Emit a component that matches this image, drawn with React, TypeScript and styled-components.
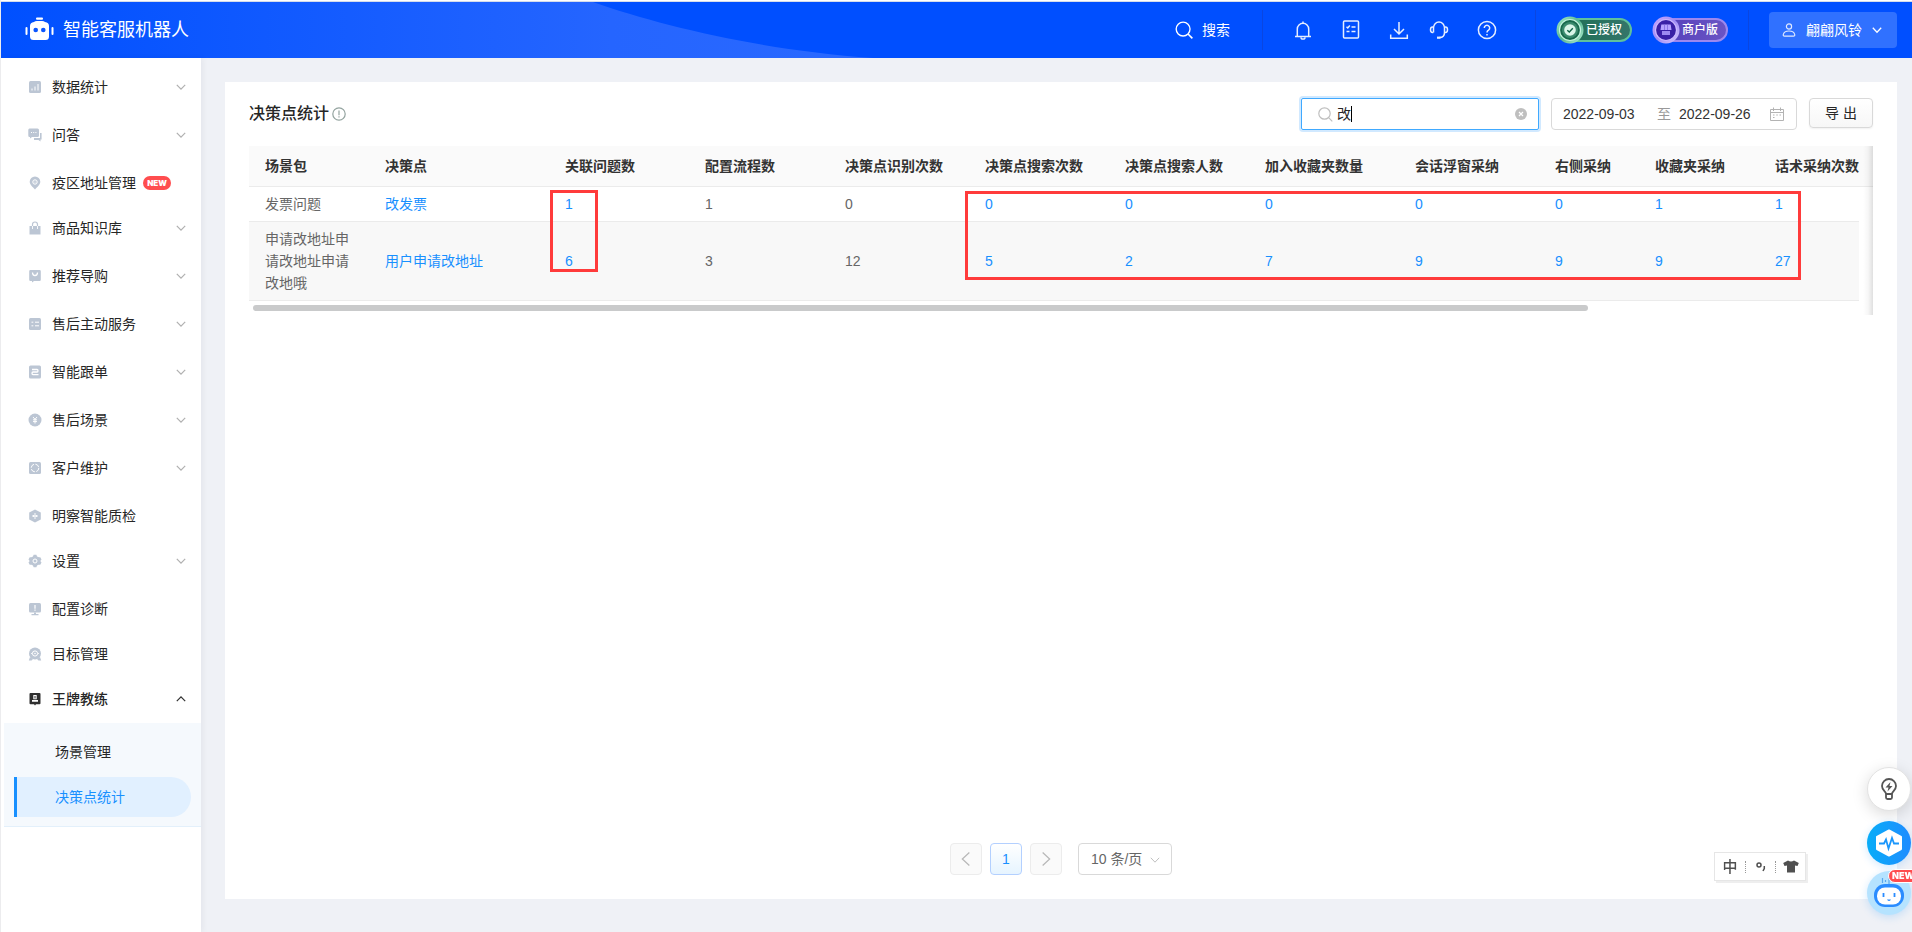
import React, { useState } from "react";
import styled, { createGlobalStyle, css } from "styled-components";

const c = {
  brand: "#004fff",
  link: "#1890ff",
  ink: "#262626",
  head: "#333333",
  body: "#666666",
  muted: "#bfbfbf",
  sideIcon: "#bcc6d4",
  page: "#eff1f6",
  line: "#ebebeb",
  field: "#d9d9d9",
  red: "#ff3b3b",
};

const GlobalStyle = createGlobalStyle`
  *, *::before, *::after { box-sizing: border-box; }
  body {
    margin: 0;
    background: #fff;
    color: ${c.ink};
    font-family: "Liberation Sans", "Noto Sans CJK SC", sans-serif;
    font-size: 14px;
    line-height: 22px;
  }
  button, input, select { font: inherit; color: inherit; margin: 0; }
  button { cursor: pointer; }
  a { text-decoration: none; color: inherit; }
  svg { display: block; flex: none; }
`;

const Shell = styled.div`
  display: flex;
  flex-direction: column;
  min-height: 100vh;
  padding-top: 1px;
  border-left: 1px solid #ececee;
  overflow-x: hidden;
`;

/* ---------- header ---------- */

const Header = styled.header`
  position: relative;
  display: flex;
  align-items: center;
  justify-content: space-between;
  height: 57px;
  padding: 0 15px 0 24px;
  border-top: 1px solid #d5dcea;
  background: ${c.brand};
  color: #fff;
`;

const Wave = styled.svg`
  position: absolute;
  left: 0;
  top: 0;
`;

const Brand = styled.h1`
  position: relative;
  display: flex;
  align-items: center;
  gap: 9px;
  margin: 0;
  font-size: 18px;
  font-weight: 400;
  line-height: 26px;
`;

const HeaderTools = styled.div`
  position: relative;
  display: flex;
  align-items: center;
`;

const PlainButton = styled.button`
  display: flex;
  align-items: center;
  gap: 9px;
  padding: 0;
  border: 0;
  background: none;
`;

const IconGroup = styled.div<{ $gap: number }>`
  display: flex;
  gap: ${(p) => p.$gap}px;
`;

const HeaderRule = styled.span<{ $before: number; $after: number }>`
  width: 1px;
  height: 40px;
  margin: 0 ${(p) => p.$after}px 0 ${(p) => p.$before}px;
  background: #0a46e0;
`;

const Medal = styled.a<{ $tone: "green" | "violet" }>`
  position: relative;
  display: flex;
  align-items: center;
  justify-content: flex-end;
  width: 76px;
  height: 28px;

  span {
    width: 66px;
    height: 24px;
    padding-left: 18px;
    border: 2px solid ${(p) => (p.$tone === "green" ? "#5fc09c" : "#9c88ee")};
    border-radius: 12px;
    background: ${(p) =>
      p.$tone === "green"
        ? "linear-gradient(90deg, #1f6f55, #34756a)"
        : "linear-gradient(90deg, #5541bb, #6a54c4)"};
    font-size: 12px;
    font-weight: 500;
    line-height: 20px;
    white-space: nowrap;
  }
  svg { position: absolute; left: 0; top: 0; }
`;

const MedalRow = styled.div`
  display: flex;
  gap: 20px;
`;

const UserButton = styled.button`
  display: flex;
  align-items: center;
  justify-content: space-between;
  width: 128px;
  height: 36px;
  padding: 0 15px 0 13px;
  border: 0;
  border-radius: 4px;
  background: #3071ff;
`;

/* ---------- sidebar ---------- */

const Columns = styled.div`
  display: flex;
  flex: 1;
`;

const Sidebar = styled.nav`
  z-index: 1;
  flex: none;
  width: 200px;
  padding-top: 5px;
  background: #fff;
  box-shadow: 2px 0 6px rgba(0, 21, 41, 0.05);
`;

const MenuList = styled.ul`
  margin: 0;
  padding: 0;
  list-style: none;
`;

const MenuEntry = styled.li<{ $group: boolean }>`
  padding: 4px 0 ${(p) => (p.$group ? 4 : 1)}px;
`;

const MenuButton = styled.button<{ $open: boolean }>`
  display: flex;
  align-items: center;
  width: 100%;
  height: 40px;
  padding: 0 15px 0 27px;
  border: 0;
  background: none;
  color: ${c.ink};
  font-weight: ${(p) => (p.$open ? 500 : 400)};

  > svg:first-child { margin-right: 10px; color: ${(p) => (p.$open ? "#303030" : c.sideIcon)}; }
  > svg:last-child:not(:first-child) {
    margin-left: auto;
    color: ${(p) => (p.$open ? "#303030" : "#b0b0b0")};
  }
`;

const NewTag = styled.span`
  width: 28px;
  height: 14px;
  margin-left: 7px;
  border-radius: 7px;
  background: #ff4d4f;
  color: #fff;
  font-family: Inter, sans-serif;
  font-size: 8px;
  font-weight: 900;
  line-height: 14px;
  text-align: center;
`;

const SubMenu = styled.ul`
  display: flex;
  flex-direction: column;
  gap: 5px;
  margin: 0 0 0 3px;
  padding: 9px 10px;
  border-bottom: 1px solid #e3f0fb;
  background: #f5f9fd;
  list-style: none;
`;

const SubLink = styled.a<{ $active: boolean }>`
  display: block;
  height: 40px;
  padding-left: 38px;
  border-left: 3px solid transparent;
  border-radius: 0 20px 20px 0;
  line-height: 40px;
  ${(p) =>
    p.$active &&
    css`
      border-left-color: ${c.link};
      background: #e1f0ff;
      color: ${c.link};
    `}
`;

/* ---------- main card ---------- */

const Main = styled.main`
  display: flex;
  flex: 1;
  min-width: 0;
  padding: 24px 15px 33px 24px;
  background: ${c.page};
`;

const Card = styled.section`
  display: flex;
  flex-direction: column;
  flex: 1;
  min-width: 0;
  padding: 16px 24px 24px;
  background: #fff;
`;

const Toolbar = styled.div`
  display: flex;
  align-items: flex-start;
  justify-content: space-between;
  margin-bottom: 16px;
`;

const Title = styled.h2`
  display: flex;
  align-items: center;
  gap: 3px;
  margin: 0;
  color: ${c.ink};
  font-size: 16px;
  font-weight: 500;
  line-height: 32px;
  svg { color: #93a39f; }
`;

const Filters = styled.form`
  display: flex;
  align-items: flex-start;
  gap: 12px;
`;

const SearchBox = styled.label`
  position: relative;
  display: flex;
  align-items: center;
  gap: 4px;
  width: 238px;
  height: 32px;
  padding: 0 11px 0 16px;
  border: 1px solid #40a9ff;
  border-radius: 2px;
  box-shadow: 0 0 0 2px rgba(24, 144, 255, 0.2);
  color: ${c.muted};

  input {
    flex: 1;
    min-width: 0;
    padding: 0;
    border: 0;
    outline: 0;
    background: none;
    color: ${c.ink};
    caret-color: transparent;
  }
`;

const Caret = styled.i`
  position: absolute;
  left: 49px;
  top: 7px;
  width: 1px;
  height: 16px;
  background: #000;
`;

const ClearButton = styled.button`
  padding: 0;
  border: 0;
  background: none;
  color: ${c.muted};
`;

const DateRange = styled.div`
  display: flex;
  align-items: center;
  width: 246px;
  height: 32px;
  padding: 0 12px 0 11px;
  border: 1px solid ${c.field};
  border-radius: 4px;
  color: #999;

  input {
    width: 74px;
    padding: 0;
    border: 0;
    background: none;
    color: ${c.head};
  }
  span { margin: 0 8px 0 20px; }
  svg { margin-left: auto; color: #b3b3b3; }
`;

const ExportButton = styled.button`
  width: 64px;
  height: 30px;
  padding: 0;
  border: 1px solid ${c.field};
  border-radius: 4px;
  background: linear-gradient(#fff, #f7f7f7);
  box-shadow: 0 1px 2px rgba(0, 0, 0, 0.06);
`;

const TableFrame = styled.div`
  position: relative;
  height: 169px;
  overflow: hidden;

  &::after {
    content: "";
    position: absolute;
    top: 0;
    right: 0;
    bottom: 0;
    width: 10px;
    background: linear-gradient(90deg, rgba(0, 0, 0, 0), rgba(0, 0, 0, 0.03) 50%, rgba(0, 0, 0, 0.12));
  }
`;

const Grid = styled.table`
  width: 100%;
  min-width: 1624px;
  table-layout: fixed;
  border-collapse: separate;
  border-spacing: 0;
  text-align: left;
`;

const HeadCell = styled.th<{ $last?: boolean }>`
  height: 41px;
  padding: 0 ${(p) => (p.$last ? 0 : 16)}px 0 16px;
  border-bottom: 1px solid ${c.line};
  background: #fafafa;
  color: ${c.head};
  font-weight: 600;
  white-space: nowrap;
`;

const Row = styled.tr<{ $shaded: boolean }>`
  td { background: ${(p) => (p.$shaded ? "#f8f8f8" : "#fff")}; }
`;

const Cell = styled.td`
  padding: 6px 16px;
  border-bottom: 1px solid ${c.line};
  color: ${c.body};
  a { color: ${c.link}; }
`;

const GutterHead = styled(HeadCell)`
  padding: 0;
`;

const Gutter = styled.td`
  && { background: #fff; }
`;

const ScrollThumb = styled.div`
  width: calc(82% + 3px);
  height: 6px;
  margin: 4px 0 0 4px;
  border-radius: 3px;
  background: #c9cacb;
`;

/* red annotation frames that lie over the table */
const Highlight = styled.div<{ $x: number; $y: number; $w: number; $h: number }>`
  position: absolute;
  left: ${(p) => p.$x}px;
  top: ${(p) => p.$y}px;
  width: ${(p) => p.$w}px;
  height: ${(p) => p.$h}px;
  border: 3px solid ${c.red};
  pointer-events: none;
`;

const Pager = styled.div`
  display: flex;
  justify-content: center;
  gap: 8px;
  margin-top: auto;
`;

const PageButton = styled.button<{ $current?: boolean }>`
  display: flex;
  align-items: center;
  justify-content: center;
  width: 32px;
  height: 32px;
  padding: 0;
  border: 1px solid ${(p) => (p.$current ? "#b3d0ff" : "#ececec")};
  border-radius: 4px;
  background: ${(p) => (p.$current ? "linear-gradient(#fff, #e6f4ff)" : "#fafafa")};
  color: ${(p) => (p.$current ? c.link : "#b8b8b8")};
`;

const SizePicker = styled.label`
  position: relative;
  margin-left: 8px;
  color: ${c.muted};

  select {
    display: block;
    width: 94px;
    height: 32px;
    padding: 0 26px 0 12px;
    border: 1px solid ${c.field};
    border-radius: 4px;
    appearance: none;
    background: #fff;
    color: ${c.body};
  }
  svg { position: absolute; right: 12px; top: 12px; pointer-events: none; }
`;

/* ---------- floating items ---------- */

const ImeBar = styled.div`
  position: fixed;
  right: 106px;
  bottom: 51px;
  display: flex;
  align-items: center;
  width: 92px;
  height: 29px;
  border: 1px solid #e6e6e6;
  background: #fff;
  box-shadow: 2px 2px 0 #eee;
  color: #505050;
  font-size: 15px;
  font-weight: 500;
`;

const ImeKey = styled.button`
  display: flex;
  align-items: center;
  justify-content: center;
  width: 30px;
  height: 12px;
  padding: 0;
  border: 0;
  background: none;
  & + & { border-left: 1px dotted #999; }
`;

const Floaters = styled.div`
  position: fixed;
  right: 1px;
  bottom: 17px;
  display: flex;
  flex-direction: column;
  gap: 6px;
`;

const Floater = styled.button<{ $kind: "tip" | "pulse" | "robot" }>`
  position: relative;
  display: flex;
  align-items: center;
  justify-content: center;
  width: 44px;
  height: 44px;
  padding: 0;
  border: 0;
  border-radius: 50%;
  ${(p) =>
    p.$kind === "tip" &&
    css`
      margin-bottom: 4px;
      border: 1px solid #e2e2e2;
      background: #fff;
      box-shadow: 0 4px 16px rgba(0, 0, 0, 0.15);
      color: #555;
    `}
  ${(p) =>
    p.$kind === "pulse" &&
    css`
      background: linear-gradient(90deg, #08adf8, #1f8cff);
      box-shadow: 0 2px 8px rgba(24, 144, 255, 0.2);
    `}
  ${(p) =>
    p.$kind === "robot" &&
    css`
      background: #b5e3ff;
      box-shadow: 0 2px 8px rgba(24, 144, 255, 0.2);
    `}
`;

const CornerTag = styled.span`
  position: absolute;
  left: 21px;
  top: -2px;
  width: 32px;
  height: 14px;
  padding-left: 3px;
  border: 1px solid #fff;
  border-radius: 7px;
  background: #ff4d4f;
  color: #fff;
  font-family: Inter, sans-serif;
  font-size: 9px;
  font-weight: 900;
  line-height: 12px;
  text-align: left;
`;

/* ---------- drawings ---------- */

const Chevron = ({ dir = "down", size = 10, width = 1 }: { dir?: "down" | "up" | "left" | "right"; size?: number; width?: number }) => {
  const d = {
    down: "M0.8 2.8 5 7.2 9.2 2.8",
    up: "M0.8 7.2 5 2.8 9.2 7.2",
    left: "M7.4 0.4 2.4 5 7.4 9.6",
    right: "M2.6 0.4 7.6 5 2.6 9.6",
  }[dir];
  return (
    <svg width={size} height={size} viewBox="0 0 10 10" fill="none" stroke="currentColor" strokeWidth={width} aria-hidden>
      <path d={d} />
    </svg>
  );
};

const sideShapes: Record<string, React.ReactNode> = {
  chart: (
    <>
      <rect x="1" y="1" width="12" height="12" rx="1.5" />
      <path d="M4 8.5V10.5M7 6.5V10.5M10 4V10.5" stroke="#fff" strokeWidth="1" />
    </>
  ),
  chat: (
    <>
      <path d="M1.500 .5H9.500Q11 .5 11 2V7.500Q11 9 9.500 9H4L2 10.500V9H1.500Q0.300 9 0.300 7.500V2Q0.300 .5 1.500 .5Z" />
      <path d="M12 5H13.600V11.500H12.500V13.500L10.500 12H6V10H12Z" />
      <path d="M3 4.500H4M5.200 4.500H6.200M7.400 4.500H8.400" stroke="#fff" strokeWidth="1.200" />
    </>
  ),
  pin: (
    <>
      <path d="M7 .5a5.300 5.300 0 0 1 5.300 5.300c0 3-3 5.200-5.300 7.700C4.700 11 1.700 8.800 1.700 5.800A5.300 5.300 0 0 1 7 .5Z" />
      <circle cx="7" cy="6" r="2.200" fill="none" stroke="#fff" strokeWidth="1" />
      <circle cx="7" cy="6" r=".6" fill="#fff" />
    </>
  ),
  bag: (
    <>
      <path d="M1.500 5H12.500V13.500H1.500Z" />
      <path d="M4.500 7V3.500a2.500 2.500 0 0 1 5 0V7" fill="none" stroke="currentColor" strokeWidth="1.200" />
      <path d="M4.500 5V8M9.500 5V8" stroke="#fff" strokeWidth=".9" />
    </>
  ),
  guide: (
    <>
      <path d="M2.500 1H11.500Q12.800 1 12.800 2.300V10.700Q12.800 12 11.500 12H6L4 13.600V12H2.500Q1.200 12 1.200 10.700V2.300Q1.200 1 2.500 1Z" />
      <path d="M4.500 3.500C4.500 7.500 9.500 7.500 9.500 3.500" fill="none" stroke="#fff" strokeWidth="1.300" />
    </>
  ),
  list: (
    <>
      <rect x="1" y="1" width="12" height="12" rx="1.500" />
      <path d="M3.500 5.200H5.300M3.500 8.800H5.300M7 5.200H11M7 8.800H11" stroke="#fff" strokeWidth="1" />
    </>
  ),
  follow: (
    <>
      <rect x="1" y=".6" width="12" height="13" rx="1.500" />
      <path d="M4 4.500H9Q10 4.500 10 5.700T9 7H5Q4 7 4 8.300T5 9.700H10.500" fill="none" stroke="#fff" strokeWidth="1.300" />
    </>
  ),
  refund: (
    <>
      <circle cx="7" cy="7" r="6.500" />
      <path d="M5 4 7 6.300 9 4M7 6V10.500M5 6.800H9M5 8.600H9" fill="none" stroke="#fff" strokeWidth="1" />
    </>
  ),
  care: (
    <>
      <rect x="1" y="1" width="12" height="12" rx="1.500" />
      <circle cx="7" cy="7" r="3.800" fill="none" stroke="#fff" strokeWidth="1" strokeDasharray="4.500 1.470" />
    </>
  ),
  inspect: (
    <>
      <path d="M7 .4 12.800 3.600V10.400L7 13.600 1.200 10.400V3.600Z" />
      <path d="M7 4V10M4 7H10M5.500 6V8M8.500 6V8" stroke="#fff" strokeWidth=".9" />
    </>
  ),
  gear: (
    <>
      <path d="M5.600.7H8.400L9 2.500 11 3.300 12.300 3.200 13.500 5.500 12.300 7 13.500 8.500 12.300 10.800 10.500 10.800 9 11.600 8.400 13.300H5.600L5 11.600 3.500 10.800 1.700 10.800.5 8.500 1.700 7 .5 5.500 1.700 3.200 3.300 3.300 5 2.500Z" />
      <circle cx="7" cy="7" r="2" fill="none" stroke="#fff" strokeWidth="1" />
    </>
  ),
  monitor: (
    <>
      <rect x="1" y="1" width="12" height="9.500" rx="1.500" />
      <path d="M6 10.500H8V12H10.500V13.200H3.500V12H6Z" />
      <path d="M7 3V6.800M7 7.600V8.700" stroke="#fff" strokeWidth="1.200" />
    </>
  ),
  target: (
    <>
      <circle cx="7" cy="6.500" r="6" />
      <path d="M2 10 .8 13.400H3.500L5 12ZM12 10 13.200 13.400H10.500L9 12Z" />
      <circle cx="7" cy="6.500" r="2.600" fill="none" stroke="#fff" strokeWidth="1" />
      <circle cx="7" cy="6.500" r=".8" fill="#fff" />
      <path d="M3.200 6.500H4.200M9.800 6.500H10.800" stroke="#fff" strokeWidth="1" />
    </>
  ),
  coach: (
    <>
      <path d="M2.500 1H11.500Q12.500 1 12.500 2V11.300Q12.500 12.300 11.500 12.300H8L7 13.400 6 12.300H2.500Q1.500 12.300 1.500 11.300V2Q1.500 1 2.500 1Z" />
      <path d="M5.300 3H8.700V7.300H5.300ZM4 8H10V9.800H4Z" fill="#fff" />
      <path d="M7 4V6.500" stroke="#303030" strokeWidth="1" />
    </>
  ),
};

const SideIcon = ({ name }: { name: string }) => (
  <svg width="14" height="14" viewBox="0 0 14 14" fill="currentColor" aria-hidden>
    {sideShapes[name]}
  </svg>
);

const HeaderIcon = ({ size = 20, children }: { size?: number; children: React.ReactNode }) => (
  <svg width={size} height={size} viewBox="0 0 20 20" fill="none" stroke="#e6eeff" strokeWidth="1.500" aria-hidden>
    {children}
  </svg>
);

const Logo = () => (
  <svg width="29" height="26" viewBox="0 0 29 26" fill="#fff" aria-hidden>
    <rect x="11" y="0.500" width="7" height="2.200" rx="1" />
    <path d="M9 5Q10 4 12 4H17Q19 4 20 5 24 5.500 24 9V19.500Q24 23 20.500 23H8.500Q5 23 5 19.500V9Q5 5.500 9 5Z" />
    <rect x="0.500" y="10" width="2" height="8" rx="1" />
    <rect x="26.500" y="10" width="2" height="8" rx="1" />
    <circle cx="10.700" cy="13" r="2.300" fill="#0a55ff" />
    <circle cx="18.300" cy="13" r="2.300" fill="#0a55ff" />
  </svg>
);

const MedalDisc = ({ tone }: { tone: "green" | "violet" }) => {
  const g = tone === "green";
  return (
    <svg width="28" height="28" viewBox="0 0 28 28" aria-hidden>
      <defs>
        <linearGradient id={`rim-${tone}`} x1="0" y1="0" x2="1" y2="1">
          <stop offset="0" stopColor={g ? "#a5ecca" : "#c8a6ff"} />
          <stop offset=".5" stopColor={g ? "#55b48d" : "#9f8cf5"} />
          <stop offset="1" stopColor={g ? "#b6f0d6" : "#d9c8ff"} />
        </linearGradient>
      </defs>
      <circle cx="14" cy="14" r="13.500" fill={`url(#rim-${tone})`} />
      <circle cx="14" cy="14" r="10.500" fill={g ? "#18694c" : "#3a20a6"} stroke={g ? "#c5f3df" : "#cdb9ff"} strokeWidth="1.200" />
      {g ? (
        <>
          <circle cx="14" cy="14" r="8" fill="#3a8a6d" />
          <circle cx="14" cy="14" r="5.800" fill="#d9f5e8" />
          <path d="M11.300 14.200 13.300 16 16.800 12.300" fill="none" stroke="#0f6145" strokeWidth="1.400" />
        </>
      ) : (
        <>
          <path d="M9.300 8.500H18.700L19.500 14H8.500Z" fill="#b6a2ff" />
          <path d="M10 15H18V19H10Z" fill="#9d89f0" />
          <path d="M12.500 8.500V14M15.500 8.500V14" stroke="#8068e0" strokeWidth=".8" />
        </>
      )}
    </svg>
  );
};

/* ---------- data ---------- */

type MenuItem = { label: string; icon: string; group?: boolean; isNew?: boolean; open?: boolean };

const menu: MenuItem[] = [
  { label: "数据统计", icon: "chart", group: true },
  { label: "问答", icon: "chat", group: true },
  { label: "疫区地址管理", icon: "pin", isNew: true },
  { label: "商品知识库", icon: "bag", group: true },
  { label: "推荐导购", icon: "guide", group: true },
  { label: "售后主动服务", icon: "list", group: true },
  { label: "智能跟单", icon: "follow", group: true },
  { label: "售后场景", icon: "refund", group: true },
  { label: "客户维护", icon: "care", group: true },
  { label: "明察智能质检", icon: "inspect" },
  { label: "设置", icon: "gear", group: true },
  { label: "配置诊断", icon: "monitor" },
  { label: "目标管理", icon: "target" },
  { label: "王牌教练", icon: "coach", group: true, open: true },
];

const columns: { title: string; width?: number; link?: boolean }[] = [
  { title: "场景包", width: 120 },
  { title: "决策点", width: 180, link: true },
  { title: "关联问题数", width: 140, link: true },
  { title: "配置流程数", width: 140 },
  { title: "决策点识别次数", width: 140 },
  { title: "决策点搜索次数", width: 140, link: true },
  { title: "决策点搜索人数", width: 140, link: true },
  { title: "加入收藏夹数量", width: 150, link: true },
  { title: "会话浮窗采纳", width: 140, link: true },
  { title: "右侧采纳", width: 100, link: true },
  { title: "收藏夹采纳", width: 120, link: true },
  { title: "话术采纳次数", link: true },
];

const rows = [
  ["发票问题", "改发票", "1", "1", "0", "0", "0", "0", "0", "0", "1", "1"],
  ["申请改地址申请改地址申请改地哦", "用户申请改地址", "6", "3", "12", "5", "2", "7", "9", "9", "9", "27"],
];

/* ---------- page ---------- */

const TopBar = () => (
  <Header>
    <Wave width="900" height="56" viewBox="0 0 900 56" aria-hidden>
      <defs>
        <linearGradient id="wave" x1="0" x2="1">
          <stop offset="0" stopColor="#0050ff" />
          <stop offset=".7" stopColor="#2565ff" />
          <stop offset="1" stopColor="#2a69ff" />
        </linearGradient>
      </defs>
      <path d="M0 0H592C660 24 760 48 872 56H0Z" fill="url(#wave)" />
    </Wave>
    <Brand>
      <Logo />
      智能客服机器人
    </Brand>
    <HeaderTools>
      <PlainButton type="button">
        <HeaderIcon size={18}>
          <circle cx="9" cy="9" r="7.700" stroke="#fff" />
          <path d="M14.500 14.500 19.300 19.300" stroke="#fff" strokeWidth="1.800" />
        </HeaderIcon>
        搜索
      </PlainButton>
      <HeaderRule $before={32} $after={30} />
      <IconGroup $gap={28}>
        <PlainButton type="button" aria-label="通知">
          <HeaderIcon>
            <path d="M2 16.500H18M4.300 16.500V9a5.700 5.700 0 0 1 11.400 0v7.500M8 17.500a2 1.600 0 0 0 4 0M10 1.500V3" />
          </HeaderIcon>
        </PlainButton>
        <PlainButton type="button" aria-label="任务">
          <HeaderIcon>
            <rect x="2.500" y="1" width="15" height="17" rx="1" />
            <path d="M5.500 6.800 6.800 8 8.800 5.500M10.500 7H14.500M5.500 11.500H8.500M10.500 11.500H14.500" />
          </HeaderIcon>
        </PlainButton>
        <IconGroup $gap={20}>
          <PlainButton type="button" aria-label="下载">
            <HeaderIcon>
              <path d="M10 2V13.500M5 9 10 14 15 9M1.700 14.500V18.300H18.300V14.500" />
            </HeaderIcon>
          </PlainButton>
          <PlainButton type="button" aria-label="客服">
            <HeaderIcon>
              <path d="M4.500 12.500V7.800a5.500 5.800 0 0 1 11 0v4.700c0 3-2 5-5 5" />
              <path d="M4.300 7H3.500Q1.500 7 1.500 9.700T3.500 12.500H4.300M15.700 7H16.500Q18.500 7 18.500 9.700T16.500 12.500H15.700" />
              <path d="M8 17.700H11.500" strokeWidth="2.200" />
            </HeaderIcon>
          </PlainButton>
        </IconGroup>
        <PlainButton type="button" aria-label="帮助">
          <HeaderIcon>
            <circle cx="10" cy="10" r="8.600" />
            <path d="M7.300 8a2.700 2.700 0 1 1 4.200 2.200C10.400 10.900 10 11.300 10 12.500M10 14V15.600" />
          </HeaderIcon>
        </PlainButton>
      </IconGroup>
      <HeaderRule $before={38} $after={20} />
      <MedalRow>
        <Medal href="#license" $tone="green">
          <span>已授权</span>
          <MedalDisc tone="green" />
        </Medal>
        <Medal href="#edition" $tone="violet">
          <span>商户版</span>
          <MedalDisc tone="violet" />
        </Medal>
      </MedalRow>
      <HeaderRule $before={20} $after={20} />
      <UserButton type="button">
        <svg width="14" height="14" viewBox="0 0 14 14" fill="none" stroke="#dfe9ff" strokeWidth="1.200" aria-hidden>
          <circle cx="7" cy="3.500" r="2.600" />
          <path d="M2.500 13.200H11.500Q13 13.200 12.700 11.500C12.200 9 10 8 7 8S1.800 9 1.300 11.500Q1 13.200 2.500 13.200Z" />
        </svg>
        翩翩风铃
        <Chevron width={1.3} />
      </UserButton>
    </HeaderTools>
  </Header>
);

const SideMenu = () => (
  <Sidebar>
    <MenuList>
      {menu.map((m) => (
        <MenuEntry key={m.label} $group={!!m.group}>
          <MenuButton type="button" $open={!!m.open} aria-expanded={m.group ? !!m.open : undefined}>
            <SideIcon name={m.icon} />
            {m.label}
            {m.isNew && <NewTag>NEW</NewTag>}
            {m.group && <Chevron dir={m.open ? "up" : "down"} width={1.2} />}
          </MenuButton>
        </MenuEntry>
      ))}
    </MenuList>
    <SubMenu>
      <li>
        <SubLink href="#scenes" $active={false}>场景管理</SubLink>
      </li>
      <li>
        <SubLink href="#decisions" $active>决策点统计</SubLink>
      </li>
    </SubMenu>
  </Sidebar>
);

const FilterBar = () => {
  const [keyword, setKeyword] = useState("改");
  return (
    <Filters onSubmit={(e) => e.preventDefault()}>
      <SearchBox>
        <svg width="15" height="15" viewBox="0 0 15 15" fill="none" stroke="currentColor" strokeWidth="1.200" aria-hidden>
          <circle cx="6.500" cy="6.500" r="5.700" />
          <path d="M10.600 10.600 14.300 14.300" />
        </svg>
        <input aria-label="搜索决策点" value={keyword} onChange={(e) => setKeyword(e.target.value)} />
        <Caret />
        <ClearButton type="button" aria-label="清空" onClick={() => setKeyword("")}>
          <svg width="12" height="12" viewBox="0 0 12 12" aria-hidden>
            <circle cx="6" cy="6" r="6" fill="currentColor" />
            <path d="M4 4 8 8M8 4 4 8" stroke="#fff" strokeWidth="1.200" />
          </svg>
        </ClearButton>
      </SearchBox>
      <DateRange>
        <input aria-label="开始日期" defaultValue="2022-09-03" />
        <span>至</span>
        <input aria-label="结束日期" defaultValue="2022-09-26" />
        <svg width="14" height="14" viewBox="0 0 14 14" fill="none" stroke="currentColor" aria-hidden>
          <path d="M.5 2.500H13.500V13.500H.5ZM.5 5.500H13.500M3.500.5V4M10.500.5V4" />
          <path d="M3 8H4.500M6.300 8H7.800M9.500 8H11M3 10.500H4.500" />
        </svg>
      </DateRange>
      <ExportButton type="button">导 出</ExportButton>
    </Filters>
  );
};

const StatsTable = () => (
  <TableFrame>
    <Grid>
      <colgroup>
        {columns.map((col) => (
          <col key={col.title} width={col.width} />
        ))}
        <col width={14} />
      </colgroup>
      <thead>
        <tr>
          {columns.map((col, i) => (
            <HeadCell key={col.title} scope="col" $last={i === columns.length - 1}>
              {col.title}
            </HeadCell>
          ))}
          <GutterHead as="td" />
        </tr>
      </thead>
      <tbody>
        {rows.map((row, r) => (
          <Row key={row[0]} $shaded={r % 2 === 1}>
            {row.map((value, i) => (
              <Cell key={columns[i].title}>{columns[i].link ? <a href="#detail">{value}</a> : value}</Cell>
            ))}
            <Gutter />
          </Row>
        ))}
      </tbody>
    </Grid>
    <ScrollThumb />
    <Highlight $x={301} $y={44} $w={48} $h={82} />
    <Highlight $x={716} $y={45} $w={836} $h={89} />
  </TableFrame>
);

const Pagination = () => (
  <Pager>
    <PageButton type="button" aria-label="上一页">
      <Chevron dir="left" size={14} width={0.9} />
    </PageButton>
    <PageButton type="button" $current>1</PageButton>
    <PageButton type="button" aria-label="下一页">
      <Chevron dir="right" size={14} width={0.9} />
    </PageButton>
    <SizePicker>
      <select aria-label="每页条数" defaultValue="10">
        <option value="10">10 条/页</option>
        <option value="20">20 条/页</option>
      </select>
      <Chevron />
    </SizePicker>
  </Pager>
);

const FloatingTools = () => (
  <>
    <ImeBar>
      <ImeKey type="button">中</ImeKey>
      <ImeKey type="button" aria-label="标点">
        <svg width="10" height="11" viewBox="0 0 10 11" fill="none" stroke="currentColor" strokeWidth="1.500" aria-hidden>
          <circle cx="3" cy="4" r="2" />
          <path d="M8.300 5V7.500L7 10" />
        </svg>
      </ImeKey>
      <ImeKey type="button" aria-label="皮肤">
        <svg width="16" height="13" viewBox="0 0 16 13" fill="currentColor" aria-hidden>
          <path d="M5 .5Q8 2.500 11 .5L15.800 3 14.500 6 12 5.500V12.500H4V5.500L1.500 6 .2 3Z" />
        </svg>
      </ImeKey>
    </ImeBar>
    <Floaters>
      <Floater type="button" $kind="tip" aria-label="提示">
        <svg width="16" height="22" viewBox="0 0 16 22" fill="none" stroke="currentColor" strokeWidth="1.800" aria-hidden>
          <path d="M5 16C5 13.500 1 12.500 1 8a7 7 0 0 1 14 0c0 4.500-4 5.500-4 8ZM5 16V19.500Q5 21 6.500 21H9.500Q11 21 11 19.500V16" />
          <path d="M9.500 4 4.500 9.500H7.500L6.500 13.500 11.500 8H8.500Z" fill="currentColor" stroke="none" />
        </svg>
      </Floater>
      <Floater type="button" $kind="pulse" aria-label="诊断">
        <svg width="28" height="28" viewBox="0 0 28 28" aria-hidden>
          <path d="M14 1.500 26 8V20L14 26.500 2 20V8Z" fill="#fff" stroke="#fff" strokeWidth="2" strokeLinejoin="round" />
          <path d="M4 14.500H9L11 10.500 13.500 19.500 17 9 19 14.500H24" fill="none" stroke="#1a96fb" strokeWidth="1.800" />
        </svg>
      </Floater>
      <Floater type="button" $kind="robot" aria-label="机器人">
        <svg width="32" height="32" viewBox="0 0 32 32" aria-hidden>
          <path d="M9.500 1V6M12.500 3V5M16 1V8" stroke="#5aa9ee" strokeWidth="1.200" />
          <rect x="1" y="7" width="30" height="23" rx="11" fill="#2a8cff" />
          <rect x="4" y="10.500" width="24" height="17" rx="8" fill="#fff" />
          <path d="M10.500 16V20M21.500 16V20" stroke="#2a8cff" strokeWidth="1.800" />
          <path d="M14 22.500H18Q16 25.500 14 22.500Z" fill="#2a8cff" />
        </svg>
        <CornerTag>NEW</CornerTag>
      </Floater>
    </Floaters>
  </>
);

export default function App() {
  return (
    <>
      <GlobalStyle />
      <Shell>
        <TopBar />
        <Columns>
          <SideMenu />
          <Main>
            <Card>
              <Toolbar>
                <Title>
                  决策点统计
                  <svg width="14" height="14" viewBox="0 0 14 14" fill="none" stroke="currentColor" strokeWidth="1.200" aria-hidden>
                    <circle cx="7" cy="7" r="6.200" />
                    <path d="M7 3.500V8.300M7 9.300V10.600" />
                  </svg>
                </Title>
                <FilterBar />
              </Toolbar>
              <StatsTable />
              <Pagination />
            </Card>
          </Main>
        </Columns>
      </Shell>
      <FloatingTools />
    </>
  );
}
